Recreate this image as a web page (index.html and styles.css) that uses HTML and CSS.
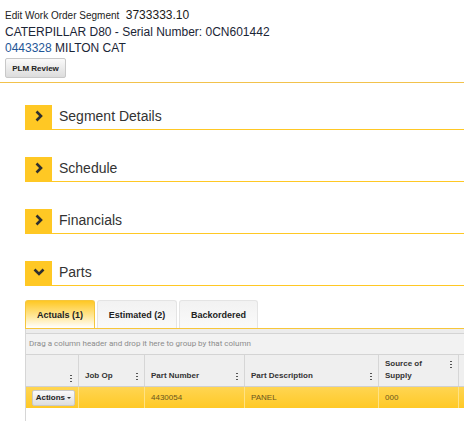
FILE: index.html
```html
<!DOCTYPE html>
<html lang="en">

<head>
    <meta charset="UTF-8">
    <title>Edit Work Order Segment</title>
    <link rel="stylesheet" href="styles.css">
</head>

<body>

    <div class="page-head">
        <div class="title-row">
            <span class="title-label">Edit Work Order Segment</span>
            <span class="wo-number">3733333.10</span>
        </div>
        <div class="equipment">CATERPILLAR D80 - Serial Number: 0CN601442</div>
        <div class="customer"><a href="#">0443328</a> MILTON CAT</div>
        <button class="btn btn-plm">PLM Review</button>
    </div>

    <div class="sections">

        <div class="section">
            <div class="section-head">
                <span class="toggle">
                    <svg width="10" height="12" viewBox="0 0 10 12"><path d="M2.5 1.5 L7 6 L2.5 10.5" /></svg>
                </span>
                <span class="section-title">Segment Details</span>
            </div>
        </div>

        <div class="section">
            <div class="section-head">
                <span class="toggle">
                    <svg width="10" height="12" viewBox="0 0 10 12"><path d="M2.5 1.5 L7 6 L2.5 10.5" /></svg>
                </span>
                <span class="section-title">Schedule</span>
            </div>
        </div>

        <div class="section">
            <div class="section-head">
                <span class="toggle">
                    <svg width="10" height="12" viewBox="0 0 10 12"><path d="M2.5 1.5 L7 6 L2.5 10.5" /></svg>
                </span>
                <span class="section-title">Financials</span>
            </div>
        </div>

        <div class="section">
            <div class="section-head">
                <span class="toggle">
                    <svg width="12" height="8" viewBox="0 0 12 8"><path d="M1.5 1.5 L6 6 L10.5 1.5" /></svg>
                </span>
                <span class="section-title">Parts</span>
            </div>

            <div class="parts">
                <div class="tabs">
                    <div class="tab active">Actuals (1)</div>
                    <div class="tab">Estimated (2)</div>
                    <div class="tab">Backordered</div>
                </div>

                <div class="grid">
                    <div class="grid-toolbar"></div>
                    <div class="group-panel">Drag a column header and drop it here to group by that column</div>

                    <div class="grid-row grid-header">
                        <div class="cell c-actions"><div class="head-inner"><span class="head-text"></span><span class="kebab"></span></div></div>
                        <div class="cell c-jobop"><div class="head-inner"><span class="head-text">Job Op</span><span class="kebab"></span></div></div>
                        <div class="cell c-partno"><div class="head-inner"><span class="head-text">Part Number</span><span class="kebab"></span></div></div>
                        <div class="cell c-desc"><div class="head-inner"><span class="head-text">Part Description</span><span class="kebab"></span></div></div>
                        <div class="cell c-source"><div class="head-inner"><span class="head-text">Source of<br>Supply</span><span class="kebab"></span></div></div>
                        <div class="cell c-extra"></div>
                    </div>

                    <div class="grid-row grid-data selected">
                        <div class="cell c-actions"><button class="btn btn-actions">Actions <span class="caret"></span></button></div>
                        <div class="cell c-jobop"></div>
                        <div class="cell c-partno">4430054</div>
                        <div class="cell c-desc">PANEL</div>
                        <div class="cell c-source">000</div>
                        <div class="cell c-extra"></div>
                    </div>
                </div>
            </div>
        </div>

    </div>

</body>

</html>
```

FILE: styles.css
```css
* {
    box-sizing: border-box;
}

html,
body {
    height: 422px;
    overflow: hidden;
}

body {
    margin: 0;
    font-family: 'Liberation Sans', Arial, sans-serif;
    color: #333;
    background: #fff;
    width: 464px;
}

/* ---- page header ---- */

.page-head {
    padding: 5px 5px 4px;
    border-bottom: 1px solid #f2c24c;
}

.title-row {
    height: 17px;
    line-height: 17px;
    white-space: nowrap;
}

.title-label {
    font-size: 10px;
    color: #222;
}

.wo-number {
    font-size: 12px;
    color: #1a1a1a;
    margin-left: 2px;
}

.equipment,
.customer {
    font-size: 12px;
    line-height: 16px;
    color: #1b2536;
    white-space: nowrap;
}

.equipment {
    margin-top: 2px;
}

.customer a {
    color: #1f5797;
    text-decoration: none;
}

.btn {
    font-family: 'Liberation Sans', Arial, sans-serif;
    font-weight: bold;
    font-size: 8px;
    color: #222;
    border: 1px solid #c8c8c8;
    border-radius: 2px;
    background: linear-gradient(#fafafa, #dcdcdc);
    cursor: pointer;
}

.btn-plm {
    display: block;
    margin-top: 2px;
    width: 61px;
    height: 20px;
    padding: 0;
}

/* ---- collapsible sections ---- */

.sections {
    padding: 22px 0 0 25px;
    overflow: hidden;
}

.section {
    margin-bottom: 27px;
}

.section:last-child {
    margin-bottom: 0;
}

.section-head {
    display: flex;
    height: 25px;
}

.toggle {
    width: 27px;
    background: #ffc824;
    display: flex;
    justify-content: center;
    align-items: center;
    padding-bottom: 4px;
}

.toggle svg path {
    fill: none;
    stroke: #2f2f2f;
    stroke-width: 2.6;
}

.section-title {
    flex: 1;
    font-size: 14px;
    line-height: 23px;
    padding-left: 7px;
    color: #333;
    border-bottom: 1px solid #ffc824;
}

/* ---- parts tabs ---- */

.parts {
    margin-top: 14px;
}

.tabs {
    display: flex;
    gap: 2px;
    height: 29px;
    border-bottom: 1px solid #f7c63a;
}

.tab {
    height: 28px;
    line-height: 28px;
    font-size: 9px;
    font-weight: bold;
    color: #222;
    text-align: center;
    border: 1px solid #e4e4e4;
    border-bottom: none;
    border-radius: 3px 3px 0 0;
    background: linear-gradient(#f2f2f2, #fafafa);
}

.tab:nth-child(1) {
    width: 70px;
}

.tab:nth-child(2) {
    width: 80px;
}

.tab:nth-child(3) {
    width: 79px;
}

.tab.active {
    border-color: #f5c63c;
    background: linear-gradient(#ffc824, #ffe9a0 60%, #fff);
}

/* ---- grid ---- */

.grid {
    border-left: 1px solid #d6d6d6;
    height: 92px;
    overflow: hidden;
}

.grid-toolbar {
    height: 5px;
    background: #ececec;
    border-bottom: 1px solid #d4d4d4;
}

.group-panel {
    height: 21px;
    line-height: 20px;
    font-family: Roboto, 'Liberation Sans', sans-serif;
    font-size: 8px;
    color: #8c8c8c;
    padding-left: 3px;
    background: #f2f2f2;
    border-bottom: 1px solid #d4d4d4;
    white-space: nowrap;
}

.grid-row {
    display: flex;
}

.cell {
    flex: none;
    border-right: 1px solid #d6d6d6;
    font-size: 8px;
    padding: 0 6px;
    white-space: nowrap;
}

.c-actions { width: 53px; }
.c-jobop { width: 66px; }
.c-partno { width: 100px; }
.c-desc { width: 134px; }
.c-source { width: 80px; }
.c-extra { width: 80px; }

.grid-header {
    height: 32px;
    background: #efefef;
    border-bottom: 1px solid #d0d0d0;
}

.grid-header .cell {
    display: flex;
    align-items: flex-end;
    padding-bottom: 4px;
}

.head-inner {
    flex: 1;
    display: flex;
    justify-content: space-between;
}

.head-text {
    line-height: 12px;
    font-weight: bold;
    color: #333;
}

.kebab {
    width: 2px;
    height: 8px;
    margin-top: 2px;
    background: radial-gradient(circle, #555 0.9px, transparent 1.1px) 0 0 / 2px 3px repeat-y;
}

.grid-data {
    height: 21px;
    background: linear-gradient(#ffd552, #ffc926);
}

.grid-data .cell {
    border-right-color: #ffe283;
    line-height: 21px;
    color: #6a5620;
}

.grid-data .c-actions {
    padding: 0 0 0 6px;
    display: flex;
    align-items: center;
}

.btn-actions {
    width: 43px;
    height: 16px;
    padding: 0;
    font-size: 8px;
    text-align: center;
    background: linear-gradient(#fafafa, #dddddd);
}

.caret {
    display: inline-block;
    vertical-align: middle;
    border-left: 2px solid transparent;
    border-right: 2px solid transparent;
    border-top: 2px solid #333;
}
```
